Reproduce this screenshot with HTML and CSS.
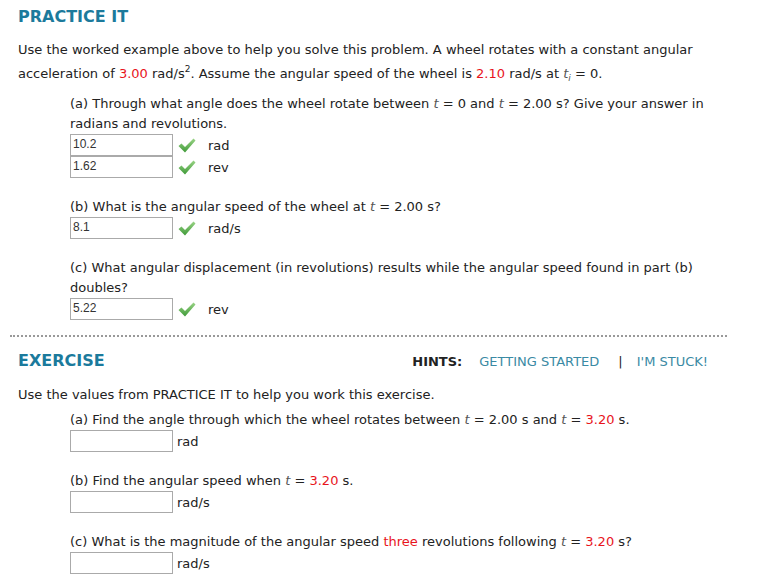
FILE: index.html
```html
<!DOCTYPE html>
<html>
<head>
<meta charset="utf-8">
<link rel="stylesheet" href="styles.css">
</head>
<body>
<div class="page">
  <section class="sec">
    <h2 class="sec-title">PRACTICE IT</h2>
    <p class="intro">Use the worked example above to help you solve this problem. A wheel rotates with a constant angular acceleration of <span class="red">3.00</span> rad/s<sup>2</sup>. Assume the angular speed of the wheel is <span class="red">2.10</span> rad/s at <i>t</i><sub><i>i</i></sub> = 0.</p>
    <div class="parts">
      <div class="part">
        <p class="q">(a) Through what angle does the wheel rotate between <i>t</i> = 0 and <i>t</i> = 2.00 s? Give your answer in radians and revolutions.</p>
        <div class="ans">
          <span class="box">10.2</span>
          <svg class="check" viewBox="0 0 18 15" width="18" height="15"><defs><linearGradient id="g1" x1="0" y1="0" x2="0" y2="1"><stop offset="0" stop-color="#9ad486"/><stop offset="1" stop-color="#3f9a38"/></linearGradient></defs><path d="M0.5 8 L3.5 5.5 L7 9 L15.5 0.5 L17.5 2.5 L7 14.5 Z" fill="url(#g1)"/></svg>
          <span class="unit">rad</span>
        </div>
        <div class="ans">
          <span class="box">1.62</span>
          <svg class="check" viewBox="0 0 18 15" width="18" height="15"><path d="M0.5 8 L3.5 5.5 L7 9 L15.5 0.5 L17.5 2.5 L7 14.5 Z" fill="url(#g1)"/></svg>
          <span class="unit">rev</span>
        </div>
      </div>
      <div class="part">
        <p class="q">(b) What is the angular speed of the wheel at <i>t</i> = 2.00 s?</p>
        <div class="ans">
          <span class="box">8.1</span>
          <svg class="check" viewBox="0 0 18 15" width="18" height="15"><path d="M0.5 8 L3.5 5.5 L7 9 L15.5 0.5 L17.5 2.5 L7 14.5 Z" fill="url(#g1)"/></svg>
          <span class="unit">rad/s</span>
        </div>
      </div>
      <div class="part">
        <p class="q">(c) What angular displacement (in revolutions) results while the angular speed found in part (b) doubles?</p>
        <div class="ans">
          <span class="box">5.22</span>
          <svg class="check" viewBox="0 0 18 15" width="18" height="15"><path d="M0.5 8 L3.5 5.5 L7 9 L15.5 0.5 L17.5 2.5 L7 14.5 Z" fill="url(#g1)"/></svg>
          <span class="unit">rev</span>
        </div>
      </div>
    </div>
  </section>
  <div class="divider"></div>
  <section class="sec">
    <div class="ex-head">
      <h2 class="sec-title">EXERCISE</h2>
      <div class="hints"><b>HINTS:</b><span class="hint">GETTING STARTED</span><span class="sep">|</span><span class="hint">I'M STUCK!</span></div>
    </div>
    <p class="intro2">Use the values from PRACTICE IT to help you work this exercise.</p>
    <div class="parts">
      <div class="part">
        <p class="q">(a) Find the angle through which the wheel rotates between <i>t</i> = 2.00 s and <i>t</i> = <span class="red">3.20</span> s.</p>
        <div class="ans"><span class="box"></span><span class="unit2">rad</span></div>
      </div>
      <div class="part">
        <p class="q">(b) Find the angular speed when <i>t</i> = <span class="red">3.20</span> s.</p>
        <div class="ans"><span class="box"></span><span class="unit2">rad/s</span></div>
      </div>
      <div class="part">
        <p class="q">(c) What is the magnitude of the angular speed <span class="red">three</span> revolutions following <i>t</i> = <span class="red">3.20</span> s?</p>
        <div class="ans"><span class="box"></span><span class="unit2">rad/s</span></div>
      </div>
    </div>
  </section>
</div>
</body>
</html>
```
FILE: styles.css
```css
html, body { margin: 0; padding: 0; background: #fff; }
body {
  font-family: "DejaVu Sans", Verdana, sans-serif;
  font-size: 13px;
  color: #222;
}
.page { width: 717px; padding: 0 10px; }
.sec { padding-left: 8px; }
.sec-title {
  margin: 0;
  font-size: 16px;
  font-weight: bold;
  color: #1b7a9c;
  line-height: 18px;
}
.page > .sec:first-child .sec-title { padding-top: 8px; }
.intro { margin: 12px 0 0 0; line-height: 24px; }
.intro sup { font-size: 9px; line-height: 0; vertical-align: 6px; }
.intro sub { font-size: 9px; line-height: 0; vertical-align: -3px; }
i { font-style: italic; color: #555; }
.red { color: #e8141c; }
.parts { padding-left: 52px; }
.part { margin-top: 19px; }
.sec > .parts > .part:first-child { margin-top: 8px; }
.q { margin: 0; line-height: 20px; }
.ans { display: flex; align-items: center; height: 22px; }
.box {
  box-sizing: border-box;
  width: 103px;
  height: 22px;
  border: 1px solid #aaa;
  font-family: "Liberation Sans", Arial, sans-serif;
  font-size: 12px;
  line-height: 19px;
  padding-left: 2px;
  color: #333;
}
.check { margin-left: 5px; }
.unit { margin-left: 12px; }
.unit2 { margin-left: 4px; }
.divider {
  margin-top: 15px;
  border-top: 2px dotted #999;
}
.ex-head {
  display: flex;
  justify-content: space-between;
  align-items: center;
  margin-top: 15px;
  padding-right: 19px;
}
.hints { font-size: 13px; color: #222; }
.hints b { margin-right: 17px; }
.hint { color: #3a8aa4; }
.sep { margin: 0 14px 0 19px; color: #222; }
.intro2 { margin: 15px 0 0 0; line-height: 20px; }
.sec:last-child > .parts > .part:first-child { margin-top: 5px; }
```
